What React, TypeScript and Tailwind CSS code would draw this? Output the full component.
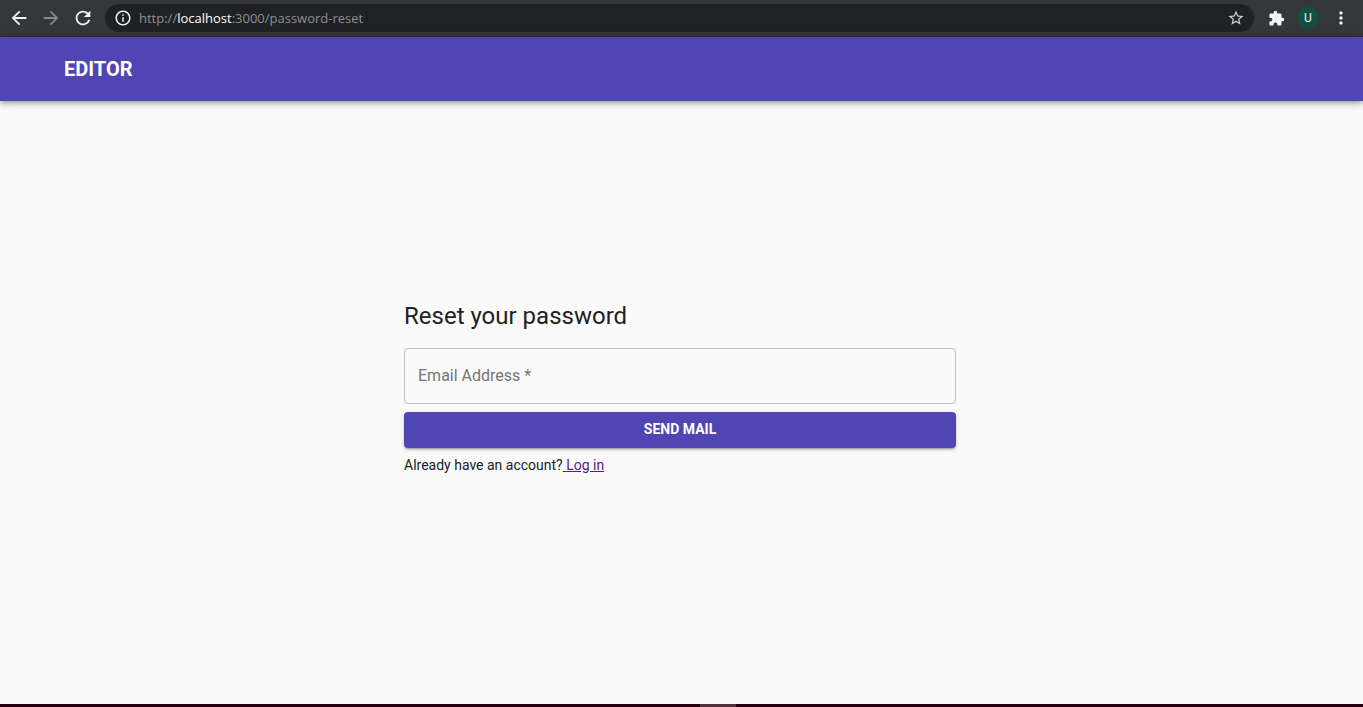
import { useState } from "react";
import {
  MdArrowBack,
  MdArrowForward,
  MdExtension,
  MdInfoOutline,
  MdMoreVert,
  MdRefresh,
  MdStarBorder,
} from "react-icons/md";

function BrowserBar() {
  return (
    <div className="flex h-[37px] shrink-0 items-center border-b border-[#292a2d] bg-[#35363a] pr-3 pl-2 text-[#f1f3f4]">
      <div className="flex items-center gap-2.5">
        <button type="button" aria-label="Back">
          <MdArrowBack size={22} />
        </button>
        <button type="button" aria-label="Forward" className="text-[#86878a]">
          <MdArrowForward size={22} />
        </button>
        <button type="button" aria-label="Reload">
          <MdRefresh size={22} />
        </button>
      </div>
      <div className="ml-[11px] flex h-7 flex-1 items-center rounded-full bg-[#202124] pr-[9px] pl-[9px]">
        <MdInfoOutline size={18} className="mr-[7px] shrink-0" />
        <span className="flex-1 font-['Open_Sans',sans-serif] text-[13px] leading-5 text-[#8f9093]">
          http://<span className="text-white">localhost</span>:3000/password-reset
        </span>
        <button type="button" aria-label="Bookmark this page" className="text-[#d0d1d3]">
          <MdStarBorder size={18} />
        </button>
      </div>
      <button type="button" aria-label="Extensions" className="ml-3.5">
        <MdExtension size={17} />
      </button>
      <button
        type="button"
        aria-label="Profile"
        className="ml-3 flex size-[22px] items-center justify-center rounded-full bg-[#134f40] font-['Roboto',sans-serif] text-xs"
      >
        U
      </button>
      <button type="button" aria-label="Menu" className="ml-3">
        <MdMoreVert size={20} />
      </button>
    </div>
  );
}

function ResetForm() {
  const [email, setEmail] = useState("");
  return (
    <form className="w-full max-w-[552px]" onSubmit={(e) => e.preventDefault()}>
      <h1 className="mb-4 text-2xl leading-8">Reset your password</h1>
      <input
        type="email"
        aria-label="Email Address"
        placeholder="Email Address *"
        required
        value={email}
        onChange={(e) => setEmail(e.target.value)}
        className="block h-14 w-full rounded border border-[#bebebe] bg-transparent px-[13px] pb-0.5 text-base outline-none placeholder:text-[#757575] focus:border-[#4f46b3]"
      />
      <button
        type="submit"
        className="mt-2 flex h-9 w-full items-center justify-center rounded bg-[#4f46b3] pb-0.5 text-sm font-bold text-white shadow-[0_3px_1px_-2px_rgba(0,0,0,0.2),0_2px_2px_0_rgba(0,0,0,0.14),0_1px_5px_0_rgba(0,0,0,0.12)]"
      >
        SEND MAIL
      </button>
      <p className="mt-[7px] text-sm leading-5">
        Already have an account?
        <a href="#login" className="text-[#551a8b] underline">
          {" "}
          Log in
        </a>
      </p>
    </form>
  );
}

export default function App() {
  return (
    <div className="flex min-h-screen flex-col bg-[#fafafa] font-['Roboto',sans-serif] text-[#212121]">
      <BrowserBar />
      <header className="z-10 flex h-16 shrink-0 items-center bg-[#4f46b3] px-16 shadow-[0_2px_4px_-1px_rgba(0,0,0,0.2),0_4px_5px_0_rgba(0,0,0,0.14),0_1px_10px_0_rgba(0,0,0,0.12)]">
        <span className="text-xl font-bold text-white">EDITOR</span>
      </header>
      <main className="flex flex-1 items-center justify-center pr-[3px] pb-[30px]">
        <ResetForm />
      </main>
      <footer className="flex h-[3px] shrink-0 justify-center bg-[#27000f] pl-[73px]">
        <div className="h-full w-9 bg-[#50303a]" />
      </footer>
    </div>
  );
}
